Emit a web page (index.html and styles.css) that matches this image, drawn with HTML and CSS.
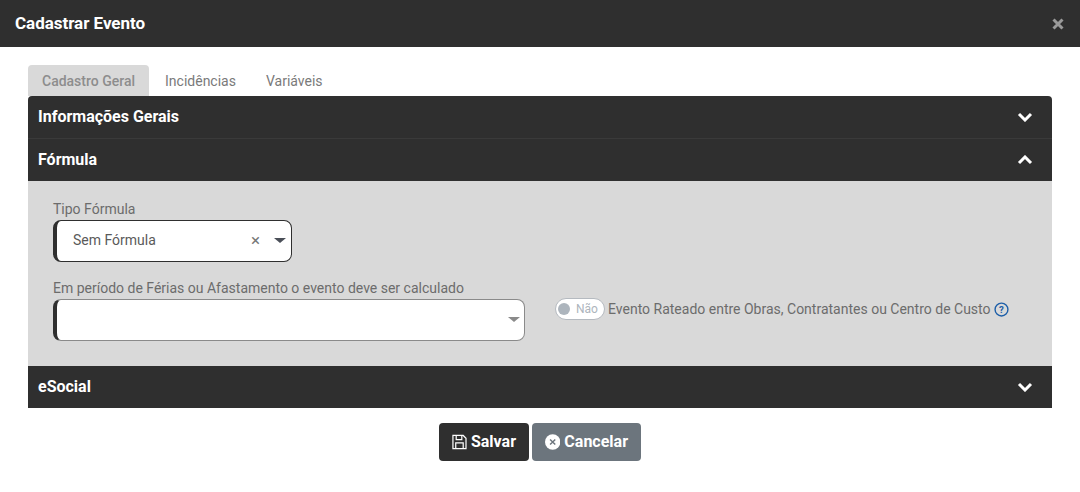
FILE: index.html
```html
<!DOCTYPE html>
<html lang="pt-BR">
<head>
<meta charset="utf-8">
<title>Cadastrar Evento</title>
<link rel="stylesheet" href="styles.css">
</head>
<body>
<header class="modal-header">
  <h1 class="modal-title">Cadastrar Evento</h1>
  <svg class="close-icon" viewBox="0 0 12 12"><path d="M1.500 1.500l9 9M10.500 1.500l-9 9"/></svg>
</header>
<main class="modal-body">
  <nav class="tabs">
    <span class="tab tab-active">Cadastro Geral</span>
    <span class="tab">Incidências</span>
    <span class="tab">Variáveis</span>
  </nav>
  <section class="accordion">
    <div class="acc-header acc-first">
      <span class="acc-title">Informações Gerais</span>
      <svg class="chevron" viewBox="0 0 16 10"><path d="M2 2l6 6 6-6"/></svg>
    </div>
    <div class="acc-header acc-second">
      <span class="acc-title">Fórmula</span>
      <svg class="chevron" viewBox="0 0 16 10"><path d="M2 8l6-6 6 6"/></svg>
    </div>
    <div class="acc-content">
      <div class="field">
        <label class="label">Tipo Fórmula</label>
        <div class="select select-small">
          <span class="select-value">Sem Fórmula</span>
          <span class="select-clear">×</span>
          <span class="caret"></span>
        </div>
      </div>
      <div class="row">
        <div class="field">
          <label class="label">Em período de Férias ou Afastamento o evento deve ser calculado</label>
          <div class="select select-large">
            <span class="select-value"></span>
            <span class="caret caret-muted"></span>
          </div>
        </div>
        <div class="toggle-group">
          <span class="toggle"><span class="knob"></span><span class="toggle-text">Não</span></span>
          <span class="toggle-label">Evento Rateado entre Obras, Contratantes ou Centro de Custo</span>
          <svg class="help" viewBox="0 0 14 14"><circle cx="7" cy="7" r="6"/><text x="7" y="10" text-anchor="middle">?</text></svg>
        </div>
      </div>
    </div>
    <div class="acc-header acc-last">
      <span class="acc-title">eSocial</span>
      <svg class="chevron" viewBox="0 0 16 10"><path d="M2 2l6 6 6-6"/></svg>
    </div>
  </section>
  <footer class="actions">
    <button class="btn btn-dark" type="button">
      <svg class="btn-icon" viewBox="0 0 16 16"><path class="save" d="M1 1h11l3 3v11h-14zM4.500 1v4.500h6v-4.500M4 15v-6h8v6"/></svg>
      <span class="btn-text">Salvar</span>
    </button>
    <button class="btn btn-gray" type="button">
      <svg class="btn-icon" viewBox="0 0 16 16"><circle class="cancel-disc" cx="8" cy="8" r="8"/><path class="cancel-x" d="M5.300 5.300l5.400 5.400M10.700 5.300l-5.400 5.400"/></svg>
      <span class="btn-text">Cancelar</span>
    </button>
  </footer>
</main>
</body>
</html>
```
FILE: styles.css
```css
* { box-sizing: border-box; }
html, body { margin: 0; padding: 0; }
body {
  width: 1080px;
  height: 492px;
  overflow: hidden;
  background: #fff;
  font-family: Roboto, "Liberation Sans", sans-serif;
  font-size: 14px;
  color: #6c6c6c;
}
.modal-header {
  height: 47px;
  background: #2f2f2f;
  display: flex;
  align-items: center;
  justify-content: space-between;
  padding: 0 16px 0 15px;
}
.modal-title { margin: -2px 0 0; font-size: 17px; font-weight: 700; letter-spacing: -0.03px; color: #fff; }
.close-icon { width: 12px; height: 12px; fill: none; stroke: #9a9a9a; stroke-width: 3; }
.modal-body { padding: 18px 28px 0; }
.tabs { display: flex; height: 31px; }
.tab { padding: 0 15px; line-height: 32px; font-size: 14px; color: #7a7a7a; }
.tab-active {
  padding: 0 14px;
  background: #d9d9d9;
  border-radius: 4px 4px 0 0;
  color: #8d8d8d;
  font-weight: 500;
  margin-right: 1px;
}
.accordion { display: flex; flex-direction: column; }
.acc-header {
  height: 42px;
  background: #2f2f2f;
  color: #fff;
  font-size: 16px;
  font-weight: 700;
  display: flex;
  align-items: center;
  justify-content: space-between;
  padding: 0 19px 0 10px;
}
.acc-title { margin-top: -2px; }
.acc-first { border-radius: 4px 4px 0 0; }
.acc-second { height: 43px; border-top: 1px solid #3a3a3a; }
.chevron { width: 16px; height: 10px; fill: none; stroke: #fff; stroke-width: 3; }
.acc-content { height: 185px; background: #d9d9d9; padding: 20px 25px 0; }
.field { display: flex; flex-direction: column; }
.label { font-size: 14px; line-height: 16px; color: #6c6c6c; margin-bottom: 3px; }
.select {
  height: 42px;
  background: #fff;
  border: 1px solid #6e6e6e;
  border-radius: 8px;
  display: flex;
  align-items: center;
  padding-left: 16px;
  color: #5a5a5a;
  font-size: 14px;
}
.select-small { width: 239px; border-color: #2f2f2f; }
.select-large { width: 472px; border-color: #8a8a8a; }
.select-small, .select-large { border-left: 4px solid #2f2f2f; }
.select-value { flex: 1; margin-top: -2px; }
.select-clear { font-size: 17px; color: #777; margin-right: 14px; margin-top: -1px; line-height: 1; }
.caret {
  width: 0;
  height: 0;
  border-left: 6px solid transparent;
  border-right: 6px solid transparent;
  border-top: 5px solid #4a4f58;
  margin-right: 5px;
  margin-top: -1px;
}
.caret-muted { border-top-color: #8a8a8a; margin-right: 4px; }
.row { display: flex; align-items: center; margin-top: 18px; }
.toggle-group { display: flex; align-items: center; margin-left: 30px; margin-top: -3px; }
.toggle {
  width: 50px;
  height: 22px;
  border: 1px solid #b5bac0;
  border-radius: 11px;
  background: #fff;
  display: flex;
  align-items: center;
  padding-left: 2px;
}
.knob { width: 12px; height: 12px; border-radius: 50%; background: #adb5bd; }
.toggle-text { font-size: 12px; color: #adb5bd; margin-left: 6px; font-weight: 400; }
.toggle-label { margin-left: 3px; font-size: 14px; color: #6c6c6c; }
.help { width: 15px; height: 15px; margin-left: 3px; fill: none; stroke: #1c5ea8; stroke-width: 1.3; }
.help text { font-size: 9px; font-weight: 700; fill: #1c5ea8; stroke: none; font-family: Roboto, sans-serif; }
.actions { display: flex; justify-content: center; gap: 3px; margin-top: 15px; }
.btn {
  height: 38px;
  border: 0;
  border-radius: 4px;
  color: #fff;
  font-family: Roboto, sans-serif;
  font-size: 16px;
  font-weight: 700;
  display: flex;
  align-items: center;
  gap: 4px;
  padding: 0 13px;
}
.btn-text { margin-top: -2px; }
.btn-dark { background: #2f2f2f; width: 90px; }
.btn-gray { background: #6c757d; width: 109px; }
.btn-icon { width: 16px; height: 16px; }
.save { fill: none; stroke: #fff; stroke-width: 1.3; }
.cancel-disc { fill: #fff; }
.cancel-x { fill: none; stroke: #6c757d; stroke-width: 1.5; }
```
